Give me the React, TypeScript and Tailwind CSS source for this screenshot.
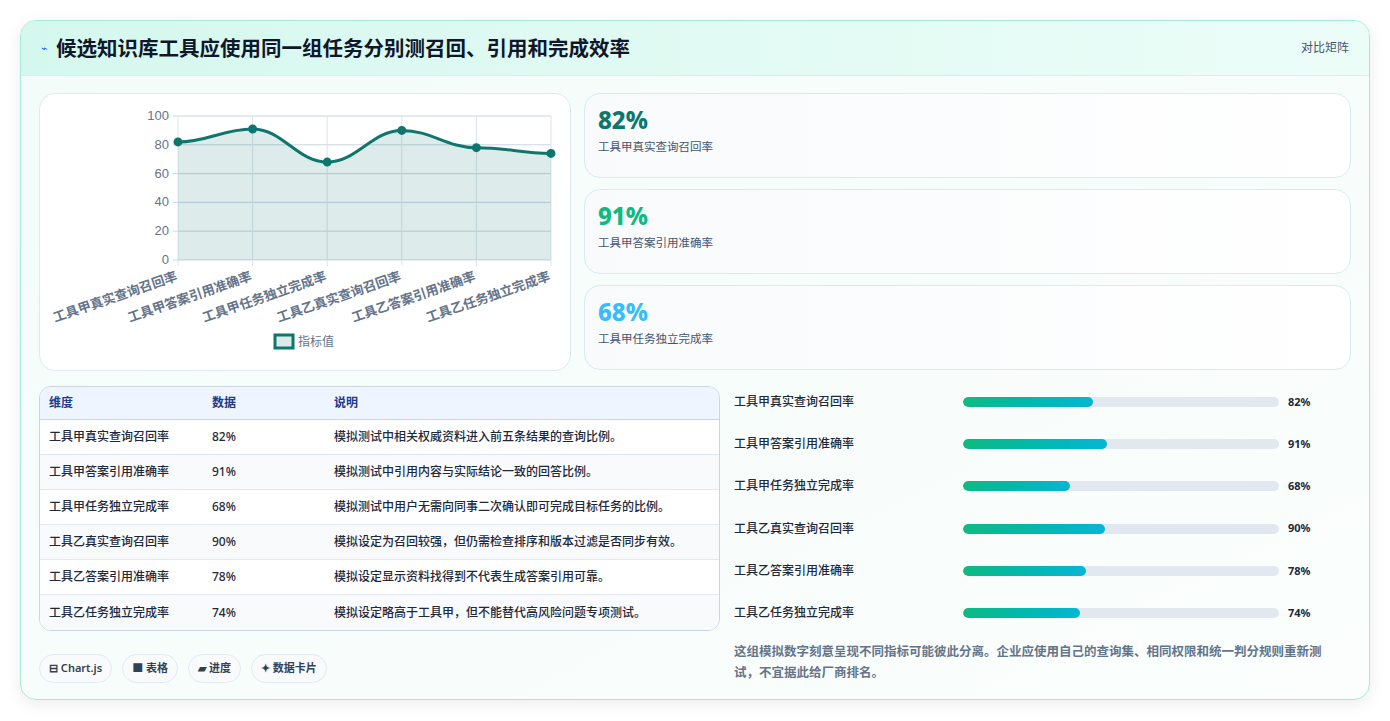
import React from "react";

const rows = [
  ["工具甲真实查询召回率", 82, "模拟测试中相关权威资料进入前五条结果的查询比例。"],
  ["工具甲答案引用准确率", 91, "模拟测试中引用内容与实际结论一致的回答比例。"],
  ["工具甲任务独立完成率", 68, "模拟测试中用户无需向同事二次确认即可完成目标任务的比例。"],
  ["工具乙真实查询召回率", 90, "模拟设定为召回较强，但仍需检查排序和版本过滤是否同步有效。"],
  ["工具乙答案引用准确率", 78, "模拟设定显示资料找得到不代表生成答案引用可靠。"],
  ["工具乙任务独立完成率", 74, "模拟设定略高于工具甲，但不能替代高风险问题专项测试。"],
] as const;

function Chart() {
  const x0 = 138, x1 = 511, yb = 166, yt = 22;
  const xs = rows.map((_, i) => x0 + ((x1 - x0) / 5) * i);
  const ys = rows.map((r) => yb - ((r[1] as number) / 100) * (yb - yt));
  let d = `M${xs[0]},${ys[0]}`;
  for (let i = 0; i < 5; i++) {
    const dx = (xs[i + 1] - xs[i]) * 0.4;
    d += ` C${xs[i] + dx},${ys[i]} ${xs[i + 1] - dx},${ys[i + 1]} ${xs[i + 1]},${ys[i + 1]}`;
  }
  const area = d + ` L${x1},${yb} L${x0},${yb} Z`;
  return (
    <svg width="531" height="277" className="block" style={{ fontFamily: "'Liberation Sans','Noto Sans CJK SC',sans-serif" }}>
      {[0, 20, 40, 60, 80, 100].map((v) => {
        const y = yb - (v / 100) * (yb - yt);
        return (
          <g key={v}>
            <line x1={x0 - 5} x2={x1} y1={y} y2={y} stroke="#cbd5e1" strokeWidth="1" />
            <text x={x0 - 9} y={y + 4} textAnchor="end" fontSize="13" fill="#64748b">{v}</text>
          </g>
        );
      })}
      {xs.map((x, i) => (
        <line key={i} x1={x} x2={x} y1={yt} y2={yb + 6} stroke="#dde3ea" strokeWidth="1" />
      ))}
      <path d={area} fill="#0f766e" fillOpacity="0.14" />
      <path d={d} fill="none" stroke="#0f766e" strokeWidth="3" />
      {xs.map((x, i) => (
        <circle key={i} cx={x} cy={ys[i]} r="3.5" fill="#0f766e" stroke="#0f766e" strokeWidth="2" />
      ))}
      {rows.map((r, i) => (
        <text key={i} x={xs[i]} y={yb + 20} textAnchor="end" fontSize="13" fontWeight="bold" fill="#64748b" transform={`rotate(-19 ${xs[i]} ${yb + 20})`}>{r[0]}</text>
      ))}
      <rect x="235" y="241" width="18" height="13" fill="#dbeae8" stroke="#0f766e" strokeWidth="3" />
      <text x="258" y="252" fontSize="12" fill="#64748b">指标值</text>
    </svg>
  );
}

export default function App() {
  return (
    <div className="min-h-[721px] bg-white p-5" style={{ fontFamily: "'Noto Sans','Noto Sans CJK SC',sans-serif" }}>
      <div className="rounded-2xl border border-[#a7e9d9] bg-gradient-to-br from-[#f3fcf9] to-[#fbfefd] shadow-[0_4px_16px_rgba(0,0,0,0.08)] overflow-hidden">
        <div className="h-[55px] flex items-center justify-between px-5 bg-gradient-to-r from-[#d5f8ee] to-[#ecfdf8] border-b border-[#d6efe8]">
          <div className="flex items-center gap-2">
            <span className="text-[11px] text-blue-600">⌁</span>
            <span className="text-[20.5px] font-bold text-[#0f172a]">候选知识库工具应使用同一组任务分别测召回、引用和完成效率</span>
          </div>
          <span className="text-[12px] text-slate-600">对比矩阵</span>
        </div>
        <div className="pl-[18px] pr-[18px] pt-[17px] pb-[16px]">
          <div className="flex gap-[13px]">
            <div className="w-[532px] h-[278px] rounded-2xl border border-[#e2e8f0] bg-white">
              <Chart />
            </div>
            <div className="flex-1 flex flex-col gap-[11px]">
              {[["82%", "text-[#0f766e]", "工具甲真实查询召回率"], ["91%", "text-[#10b981]", "工具甲答案引用准确率"], ["68%", "text-[#38bdf8]", "工具甲任务独立完成率"]].map(([v, c, l]) => (
                <div key={v} className="h-[85px] rounded-2xl border border-[#d7ebf0] bg-gradient-to-r from-[#f8fafc] to-white px-[13px] pt-[10px]">
                  <div className={`text-[24px] font-extrabold leading-[32px] ${c}`}>{v}</div>
                  <div className="text-[11.5px] text-slate-600 mt-[2px]">{l}</div>
                </div>
              ))}
            </div>
          </div>
          <div className="flex mt-[15px] gap-[14px]">
            <div className="w-[681px]">
              <div className="rounded-xl border border-[#cbd5e1] overflow-hidden bg-white">
                <div className="flex h-[33px] items-center bg-[#eef5ff] border-b border-[#cbd5e1] text-[12px] font-semibold text-[#1e3a8a]">
                  <div className="w-[172px] pl-[9px]">维度</div>
                  <div className="w-[122px]">数据</div>
                  <div>说明</div>
                </div>
                {rows.map((r, i) => (
                  <div key={i} className={`flex h-[35px] items-center text-[12px] font-medium text-[#1e293b] ${i < 5 ? "border-b border-[#e2e8f0]" : ""} ${i % 2 ? "bg-[#f8fafc]" : "bg-white"}`}>
                    <div className="w-[172px] pl-[9px]">{r[0]}</div>
                    <div className="w-[122px]">{r[1]}%</div>
                    <div>{r[2]}</div>
                  </div>
                ))}
              </div>
              <div className="flex gap-[10px] mt-[23px]">
                {["⊟ Chart.js", "■ 表格", "▰ 进度", "✦ 数据卡片"].map((t) => (
                  <div key={t} className="h-[29px] px-[9px] rounded-full border border-[#e2e8f0] bg-[#f8fafc] flex items-center text-[11px] font-semibold text-[#334155]">{t}</div>
                ))}
              </div>
            </div>
            <div className="flex-1 pr-[19px] -mt-[5px]">
              <div className="flex flex-col">
                {rows.map((r, i) => (
                  <div key={i} className="h-[42.2px] flex items-center text-[12px] font-medium text-[#1e293b]">
                    <div className="w-[229px]">{r[0]}</div>
                    <div className="w-[316px] h-[10px] rounded-full bg-[#e2e8f0] overflow-hidden">
                      <div className="h-full rounded-full bg-gradient-to-r from-[#10b981] to-[#06b6d4]" style={{ width: `${(r[1] as number) / 2}%` }} />
                    </div>
                    <div className="ml-[9px] text-[11px] font-bold">{r[1]}%</div>
                  </div>
                ))}
              </div>
              <p className="mt-[7px] text-[12.5px] leading-[21px] font-semibold text-[#64748b]">这组模拟数字刻意呈现不同指标可能彼此分离。企业应使用自己的查询集、相同权限和统一判分规则重新测试，不宜据此给厂商排名。</p>
            </div>
          </div>
        </div>
      </div>
    </div>
  );
}
